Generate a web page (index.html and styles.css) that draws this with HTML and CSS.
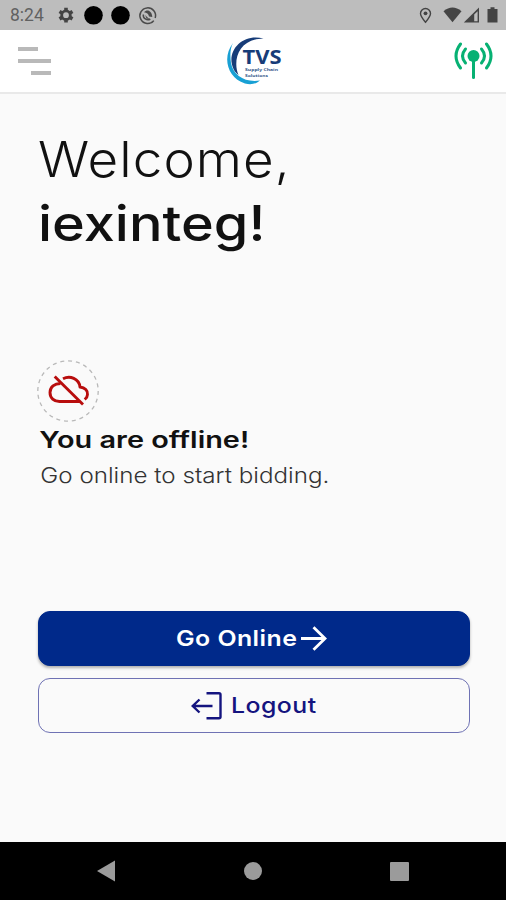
FILE: index.html
```html
<!DOCTYPE html>
<html lang="en">
<head>
    <meta charset="UTF-8">
    <meta name="viewport" content="width=device-width, initial-scale=1.0">
    <title>TVS Supply Chain Solutions</title>
    <link rel="stylesheet" href="styles.css">
</head>
<body>
    <div class="status-bar">
        <span class="clock">8:24</span>
        <svg class="status-left" width="106" height="30" viewBox="0 0 106 30">
            <g fill="none" stroke="#444">
                <circle cx="12" cy="15.200" r="4.300" stroke-width="2.800"/>
                <path d="M12 7.800v3M12 19.600v3M5.500 11.500l2.600 1.500M15.900 17.400l2.600 1.500M5.500 18.900l2.600-1.500M15.900 13l2.600-1.500" stroke-width="3.600"/>
            </g>
            <circle cx="39.500" cy="15.300" r="9.300"/>
            <circle cx="66.500" cy="15.300" r="9.300"/>
            <g fill="none" stroke="#4a4a4a" stroke-width="1.500">
                <path d="M99.800 20.600a7.800 7.800 0 1 1 1.400-2.600M98.600 21.800q-1 .800-2 1.100"/>
                <path d="M89.300 14.500a4.600 4.600 0 0 0 7 4.500"/>
            </g>
            <path d="M90 12.300c3-3.500 8-1.500 8.300 4.700l-3.300-.500c-.500-2.500-2-3.800-5-4.200z" fill="#4a4a4a"/>
            <path d="M91 15l4.500 4.200-3-.700z" fill="#4a4a4a"/>
        </svg>
        <svg class="status-right" width="84" height="30" viewBox="0 0 84 30">
            <path d="M9.500 22.200c-3-3.500-5-6-5-8.700a5 5 0 0 1 10 0c0 2.700-2 5.200-5 8.700z" fill="none" stroke="#444" stroke-width="1.400"/>
            <circle cx="9.500" cy="13.300" r="1.900" fill="#444"/>
            <path d="M27.500 11.200q9-7.500 18 0L36.500 22.300z" fill="#444"/>
            <path d="M47.800 22.500L63 7.500V22.500z" fill="#444"/>
            <path d="M58.200 14.500L61.600 11.300V21.200H58.200z" fill="#bdbdbd"/>
            <path d="M71.500 9h3V7.300h4V9h3v13.500h-10z" fill="#444"/>
        </svg>
    </div>

    <header class="app-header">
        <div class="menu">
            <span class="bar bar-top"></span>
            <span class="bar"></span>
            <span class="bar bar-bottom"></span>
        </div>
        <svg class="logo" width="60" height="52" viewBox="0 0 60 52">
            <path d="M39.500 3.500C22-1.500 6 11 7.500 27c1 6 3 10 7 13C8.500 26 14 4 39.500 3.500z" fill="#173c78"/>
            <path d="M9 8C-2 22 3 43 21 48.500c6 1.500 11 .500 15-3-15 2.500-27-5.500-29-17.500C6 20 6 14 9 8z" fill="#18a0d4"/>
            <text x="18.500" y="28.500" class="logo-name" textLength="39" lengthAdjust="spacingAndGlyphs">TVS</text>
            <text x="21" y="36" class="logo-tag" textLength="33" lengthAdjust="spacingAndGlyphs">Supply Chain</text>
            <text x="21" y="41.700" class="logo-tag" textLength="23" lengthAdjust="spacingAndGlyphs">Solutions</text>
        </svg>
        <svg class="signal" width="40" height="40" viewBox="0 0 40 40">
            <circle cx="20.500" cy="16" r="6" fill="#07b173"/>
            <g fill="none" stroke="#07b173" stroke-width="3" stroke-linecap="round">
                <path d="M20.500 18v19.500"/>
                <path d="M12.500 9q-6 7 0 14M28.500 9q6 7 0 14"/>
                <path d="M7.500 4q-9 12 0 24M33.500 4q9 12 0 24"/>
            </g>
        </svg>
    </header>

    <main class="content">
        <h1 class="greeting">
            <span class="greeting-hello">Welcome,</span>
            <span class="greeting-user">iexinteg!</span>
        </h1>

        <section class="connection">
            <svg class="cloud" width="62" height="62" viewBox="0 0 62 62">
                <circle cx="31" cy="31" r="30.200" fill="none" stroke="#b9b9b9" stroke-width="1.300" stroke-dasharray="4 3.900"/>
                <g fill="none" stroke="#b80d0d" stroke-width="2.900" stroke-linejoin="round">
                    <path d="M17.700 16.500L46 44.500"/>
                    <path d="M23.500 23.500c-6 0-10.500 3.500-10.500 9 0 5.500 4 9 9.500 9H43"/>
                    <path d="M26 18.800c7-3.500 16-.300 17 8.200 5 .500 8 3.500 7.500 7.500 0 2-1 3.500-2.800 5"/>
                </g>
            </svg>
            <h2 class="connection-title">You are offline!</h2>
            <p class="connection-text">Go online to start bidding.</p>
        </section>

        <div class="actions">
            <button class="btn btn-primary">
                <span class="btn-label label-online">Go Online</span>
                <svg width="26" height="26" viewBox="0 0 26 26" fill="none" stroke="#fff" stroke-width="2.800">
                    <path d="M0 12.500h24M12.500 1.300L24 12.500 12.500 23.700"/>
                </svg>
            </button>
            <button class="btn btn-outline">
                <svg width="31" height="28" viewBox="0 0 31 28" fill="none" stroke="#14147f" stroke-width="2.400">
                    <path d="M15.500 1.300h12.500q1.500 0 1.500 1.500v22q0 1.500-1.500 1.500H15.500"/>
                    <path d="M21.500 14H2M8.500 7.500L1.700 14l6.800 6.500"/>
                </svg>
                <span class="btn-label label-logout">Logout</span>
            </button>
        </div>
    </main>

    <nav class="nav-bar">
        <svg width="18" height="22" viewBox="0 0 18 22"><path d="M0 11L18 .500v21z"/></svg>
        <svg width="18" height="18" viewBox="0 0 18 18"><circle cx="9" cy="9" r="9"/></svg>
        <svg width="19" height="19" viewBox="0 0 19 19"><rect width="19" height="19" rx="1"/></svg>
    </nav>
</body>
</html>
```
FILE: styles.css
```css
body {
    margin: 0;
    height: 900px;
    display: flex;
    flex-direction: column;
    background: #fafafa;
    font-family: Inter, "Open Sans", sans-serif;
    color: #111;
    overflow: hidden;
}
h1, h2, p { margin: 0; }
svg { display: block; flex: none; }

.status-bar {
    height: 30px;
    display: flex;
    align-items: center;
    background: #bdbdbd;
}
.clock {
    width: 44px;
    padding-left: 10px;
    font: 17.5px Roboto, sans-serif;
    line-height: 30px;
    color: #616161;
}
.status-right { margin-left: auto; margin-right: 6px; }

.app-header {
    height: 62px;
    display: flex;
    align-items: flex-start;
    justify-content: space-between;
    background: white;
    border-bottom: 2px solid #e9e9e9;
}
.menu {
    width: 33px;
    padding: 17px 0 0 18px;
    display: flex;
    flex-direction: column;
    gap: 8px;
}
.bar { height: 4px; background: #b9b9b9; }
.bar-top { width: 20px; }
.bar-bottom { width: 20px; align-self: flex-end; }
.logo { margin: 5px 0 0 4px; }
.logo-name { font: bold 20px "Open Sans", sans-serif; fill: #173c78; }
.logo-tag { font: bold 4.2px "Open Sans", sans-serif; fill: #35598c; }
.signal { margin: 10px 13px 0 0; }

.content {
    height: 748px;
    padding: 34px 36px 0 38px;
    box-sizing: border-box;
}
.greeting {
    display: flex;
    flex-direction: column;
    align-items: flex-start;
    height: 232px;
    font-size: 49px;
    line-height: 64px;
    white-space: nowrap;
}
.greeting-hello {
    font-weight: 300;
    letter-spacing: 1px;
    transform-origin: left;
    transform: scaleX(1.08);
}
.greeting-user {
    font-weight: 500;
    transform-origin: left;
    transform: scaleX(1.14);
}

.connection { height: 251px; }
.cloud { margin-left: -1px; }
.connection-title {
    font-size: 23px;
    font-weight: 600;
    line-height: 36px;
    width: max-content;
    padding-left: 1px;
    transform-origin: left;
    transform: scaleX(1.255);
}
.connection-text {
    font-size: 21.5px;
    font-weight: 300;
    line-height: 34px;
    width: max-content;
    padding-left: 2px;
    color: #333;
    transform-origin: left;
    transform: scaleX(1.125);
}

.actions {
    display: flex;
    flex-direction: column;
    gap: 12px;
}
.btn {
    display: flex;
    align-items: center;
    justify-content: center;
    height: 55px;
    width: 432px;
    padding: 0;
    border-radius: 12px;
    font: 600 22px Inter, sans-serif;
}
.btn-label {
    position: relative;
    top: -1px;
    letter-spacing: 0.4px;
    transform-origin: left;
    transform: scaleX(1.13);
}
.btn-primary {
    gap: 18px;
    padding-right: 5px;
    border: 1px solid #00298a;
    background: #00298a;
    color: white;
    box-shadow: 0 2px 3px rgba(0,0,0,0.3);
}
.btn-outline {
    gap: 9px;
    padding-right: 10px;
    border: 1.5px solid #6f72b4;
    background: #fafafa;
    color: #14147f;
    font-weight: 500;
}

.nav-bar {
    height: 58px;
    display: flex;
    align-items: center;
    justify-content: space-between;
    padding: 0 97px;
    box-sizing: border-box;
    background: black;
    fill: #9b9b9b;
}
```
